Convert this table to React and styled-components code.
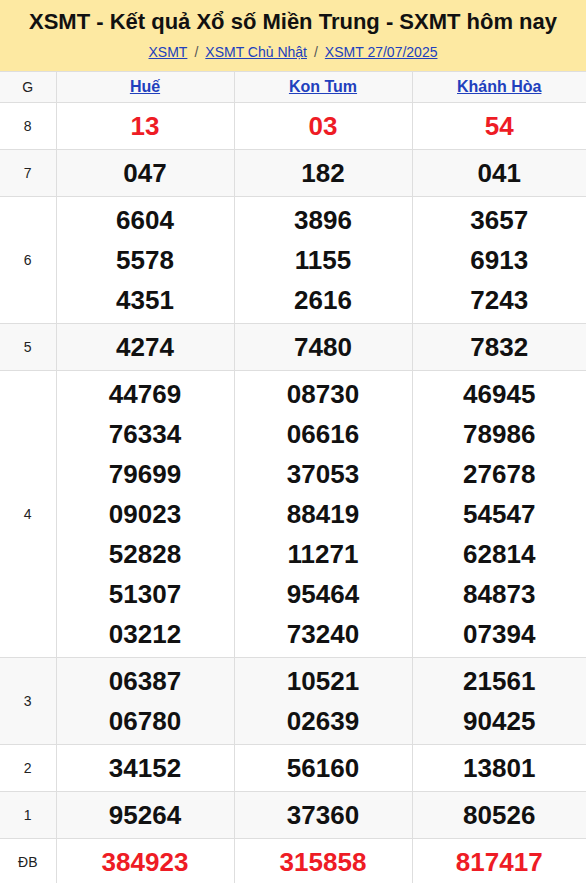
import React from "react";
import styled, { createGlobalStyle } from "styled-components";

const GlobalStyle = createGlobalStyle`
  body {
    margin: 0;
    font-family: "Liberation Sans", Arial, sans-serif;
    background: #fff;
  }
`;

const Page = styled.div`
  width: 586px;
  overflow: hidden;
`;

const Header = styled.div`
  background-color: #fde9a2;
  height: 71px;
  display: flex;
  flex-direction: column;
  align-items: center;
  box-sizing: border-box;
  padding-top: 8px;
`;

const Title = styled.h1`
  margin: 0;
  font-size: 22px;
  line-height: 28px;
  font-weight: 700;
  color: #111;
  white-space: nowrap;
`;

const Crumbs = styled.div`
  margin-top: 8px;
  font-size: 14px;
  color: #555;
  display: flex;
  gap: 7px;
`;

const Crumb = styled.a`
  color: #2140bd;
  text-decoration: underline;
`;

const Table = styled.table`
  width: 586px;
  border-collapse: collapse;
  table-layout: fixed;
`;

const Row = styled.tr`
  background-color: ${(p) => (p.$shade ? "#f8f8f8" : "#fff")};
`;

const LabelCell = styled.td`
  border: 1px solid #dedede;
  border-left: none;
  text-align: center;
  font-size: 14px;
  font-weight: 400;
  color: #222;
  padding: 0;
`;

const HeadCell = styled.th`
  border: 1px solid #dedede;
  border-right: ${(p) => (p.$last ? "none" : "1px solid #dedede")};
  height: 30px;
  padding: 0;
  font-size: 16px;
  font-weight: 700;
`;

const Province = styled.a`
  color: #2140bd;
  text-decoration: underline;
`;

const NumCell = styled.td`
  border: 1px solid #dedede;
  border-right: ${(p) => (p.$last ? "none" : "1px solid #dedede")};
  text-align: center;
  padding: 3px 0;
`;

const Num = styled.div`
  font-size: 26px;
  line-height: 40px;
  font-weight: 700;
  color: ${(p) => (p.$red ? "#ee1c25" : "#111")};
`;

const provinces = ["Huế", "Kon Tum", "Khánh Hòa"];

const prizes = [
  { g: "8", red: true, vals: [["13"], ["03"], ["54"]] },
  { g: "7", vals: [["047"], ["182"], ["041"]] },
  {
    g: "6",
    vals: [
      ["6604", "5578", "4351"],
      ["3896", "1155", "2616"],
      ["3657", "6913", "7243"],
    ],
  },
  { g: "5", vals: [["4274"], ["7480"], ["7832"]] },
  {
    g: "4",
    vals: [
      ["44769", "76334", "79699", "09023", "52828", "51307", "03212"],
      ["08730", "06616", "37053", "88419", "11271", "95464", "73240"],
      ["46945", "78986", "27678", "54547", "62814", "84873", "07394"],
    ],
  },
  {
    g: "3",
    vals: [
      ["06387", "06780"],
      ["10521", "02639"],
      ["21561", "90425"],
    ],
  },
  { g: "2", vals: [["34152"], ["56160"], ["13801"]] },
  { g: "1", vals: [["95264"], ["37360"], ["80526"]] },
  { g: "ĐB", red: true, vals: [["384923"], ["315858"], ["817417"]] },
];

const App = () => {
  return (
    <Page>
      <GlobalStyle />
      <Header>
        <Title>XSMT - Kết quả Xổ số Miền Trung - SXMT hôm nay</Title>
        <Crumbs>
          <Crumb href="#">XSMT</Crumb>
          <span>/</span>
          <Crumb href="#">XSMT Chủ Nhật</Crumb>
          <span>/</span>
          <Crumb href="#">XSMT 27/07/2025</Crumb>
        </Crumbs>
      </Header>
      <Table>
        <colgroup>
          <col style={{ width: 56 }} />
          <col style={{ width: 178 }} />
          <col style={{ width: 178 }} />
          <col style={{ width: 174 }} />
        </colgroup>
        <thead>
          <Row $shade>
            <LabelCell as="th">G</LabelCell>
            {provinces.map((p, i) => (
              <HeadCell key={p} $last={i === 2}>
                <Province href="#">{p}</Province>
              </HeadCell>
            ))}
          </Row>
        </thead>
        <tbody>
          {prizes.map((row, ri) => (
            <Row key={row.g} $shade={ri % 2 === 1}>
              <LabelCell>{row.g}</LabelCell>
              {row.vals.map((col, ci) => (
                <NumCell key={ci} $last={ci === 2}>
                  {col.map((v) => (
                    <Num key={v} $red={row.red}>
                      {v}
                    </Num>
                  ))}
                </NumCell>
              ))}
            </Row>
          ))}
        </tbody>
      </Table>
    </Page>
  );
};

export default App;
